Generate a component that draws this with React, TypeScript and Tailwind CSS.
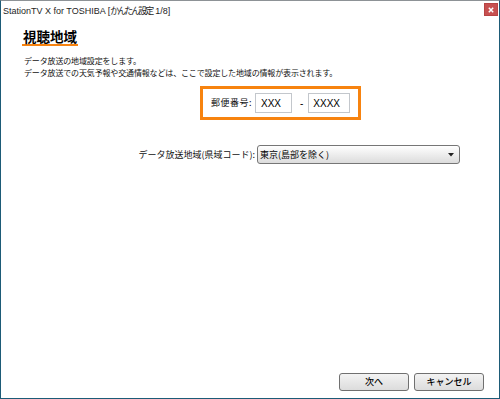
import React from "react";

export default function App() {
  return (
    <div className="w-[500px] h-[399px] bg-white border-t border-t-[#8d9296] border-x border-b border-x-[#1d5b77] border-b-[#1d5b77] flex flex-col overflow-hidden font-['Liberation_Sans','Noto_Sans_CJK_JP',sans-serif]">
      {/* title bar */}
      <div className="h-[21px] flex items-start justify-between pl-[2px] pr-[1px] shrink-0">
        <div className="text-[9px] leading-[12px] pt-[4px] text-[#1e1e1e]">
          StationTV X for TOSHIBA [<span className="tracking-[-2px] font-['Noto_Sans_CJK_JP',sans-serif]">かんたん設定</span>
          <span className="ml-[3px]">1/8]</span>
        </div>
        <div className="mt-[2px] w-[14px] h-[13px] bg-[#c75050] border border-[#b84444] flex items-center justify-center">
          <svg width="6" height="6" viewBox="0 0 6 6">
            <path d="M0.8 0.8 L5.2 5.2 M5.2 0.8 L0.8 5.2" stroke="white" strokeWidth="1.5" />
          </svg>
        </div>
      </div>

      {/* content */}
      <div className="flex flex-col pl-[21px] flex-1 font-['Noto_Sans_CJK_JP',sans-serif]">
        <div className="mt-[6px] self-start px-[1px] border-b-2 border-[#f7830f]">
          <div className="text-[13.5px] leading-[16px] font-bold text-black">視聴地域</div>
        </div>

        <div className="mt-[9px] pl-[2px] text-[8px] leading-[12px] tracking-[-0.15px] text-[#111]">
          <div>データ放送の地域設定をします。</div>
          <div>データ放送での天気予報や交通情報などは、ここで設定した地域の情報が表示されます。</div>
        </div>

        <div className="mt-[7px] ml-[178px] w-[161px] h-[34px] border-[3px] border-[#f7830f] flex items-center pl-[8px]">
          <span className="text-[9px] tracking-[0.5px] text-[#111]">郵便番号:</span>
          <div className="ml-[3px] w-[37px] h-[20px] border border-[#c3c7cc] bg-white flex items-center pl-[5px] text-[10px] text-black font-['Liberation_Sans',sans-serif]">
            XXX
          </div>
          <span className="ml-[8px] text-[10px] text-black font-['Liberation_Sans',sans-serif]">-</span>
          <div className="ml-[5px] w-[42px] h-[20px] border border-[#c3c7cc] bg-white flex items-center pl-[4px] text-[10px] text-black font-['Liberation_Sans',sans-serif]">
            XXXX
          </div>
        </div>

        <div className="mt-[25px] flex items-center">
          <div className="w-[235px] text-right pr-[2px] text-[9px] text-[#111]">データ放送地域(県域コード):</div>
          <div className="w-[203px] h-[19px] border border-[#767676] rounded-[3px] bg-gradient-to-b from-white to-[#dcdcdc] flex items-center justify-between pl-[2px] pr-[5px]">
            <span className="text-[9px] text-black">東京(島部を除く)</span>
            <svg width="6" height="4" viewBox="0 0 6 4">
              <path d="M0 0 L6 0 L3 3.5 Z" fill="#222" />
            </svg>
          </div>
        </div>

        <div className="mt-auto mb-[7px] self-end mr-[15px] flex gap-[5px]">
          <button className="w-[70px] h-[18px] border border-[#707070] rounded-[3px] bg-gradient-to-b from-[#f3f3f3] to-[#dcdcdc] text-[9px] font-medium text-black flex items-center justify-center">
            次へ
          </button>
          <button className="w-[70px] h-[18px] border border-[#707070] rounded-[3px] bg-gradient-to-b from-[#f3f3f3] to-[#dcdcdc] text-[9px] font-medium text-black flex items-center justify-center">
            キャンセル
          </button>
        </div>
      </div>
    </div>
  );
}
